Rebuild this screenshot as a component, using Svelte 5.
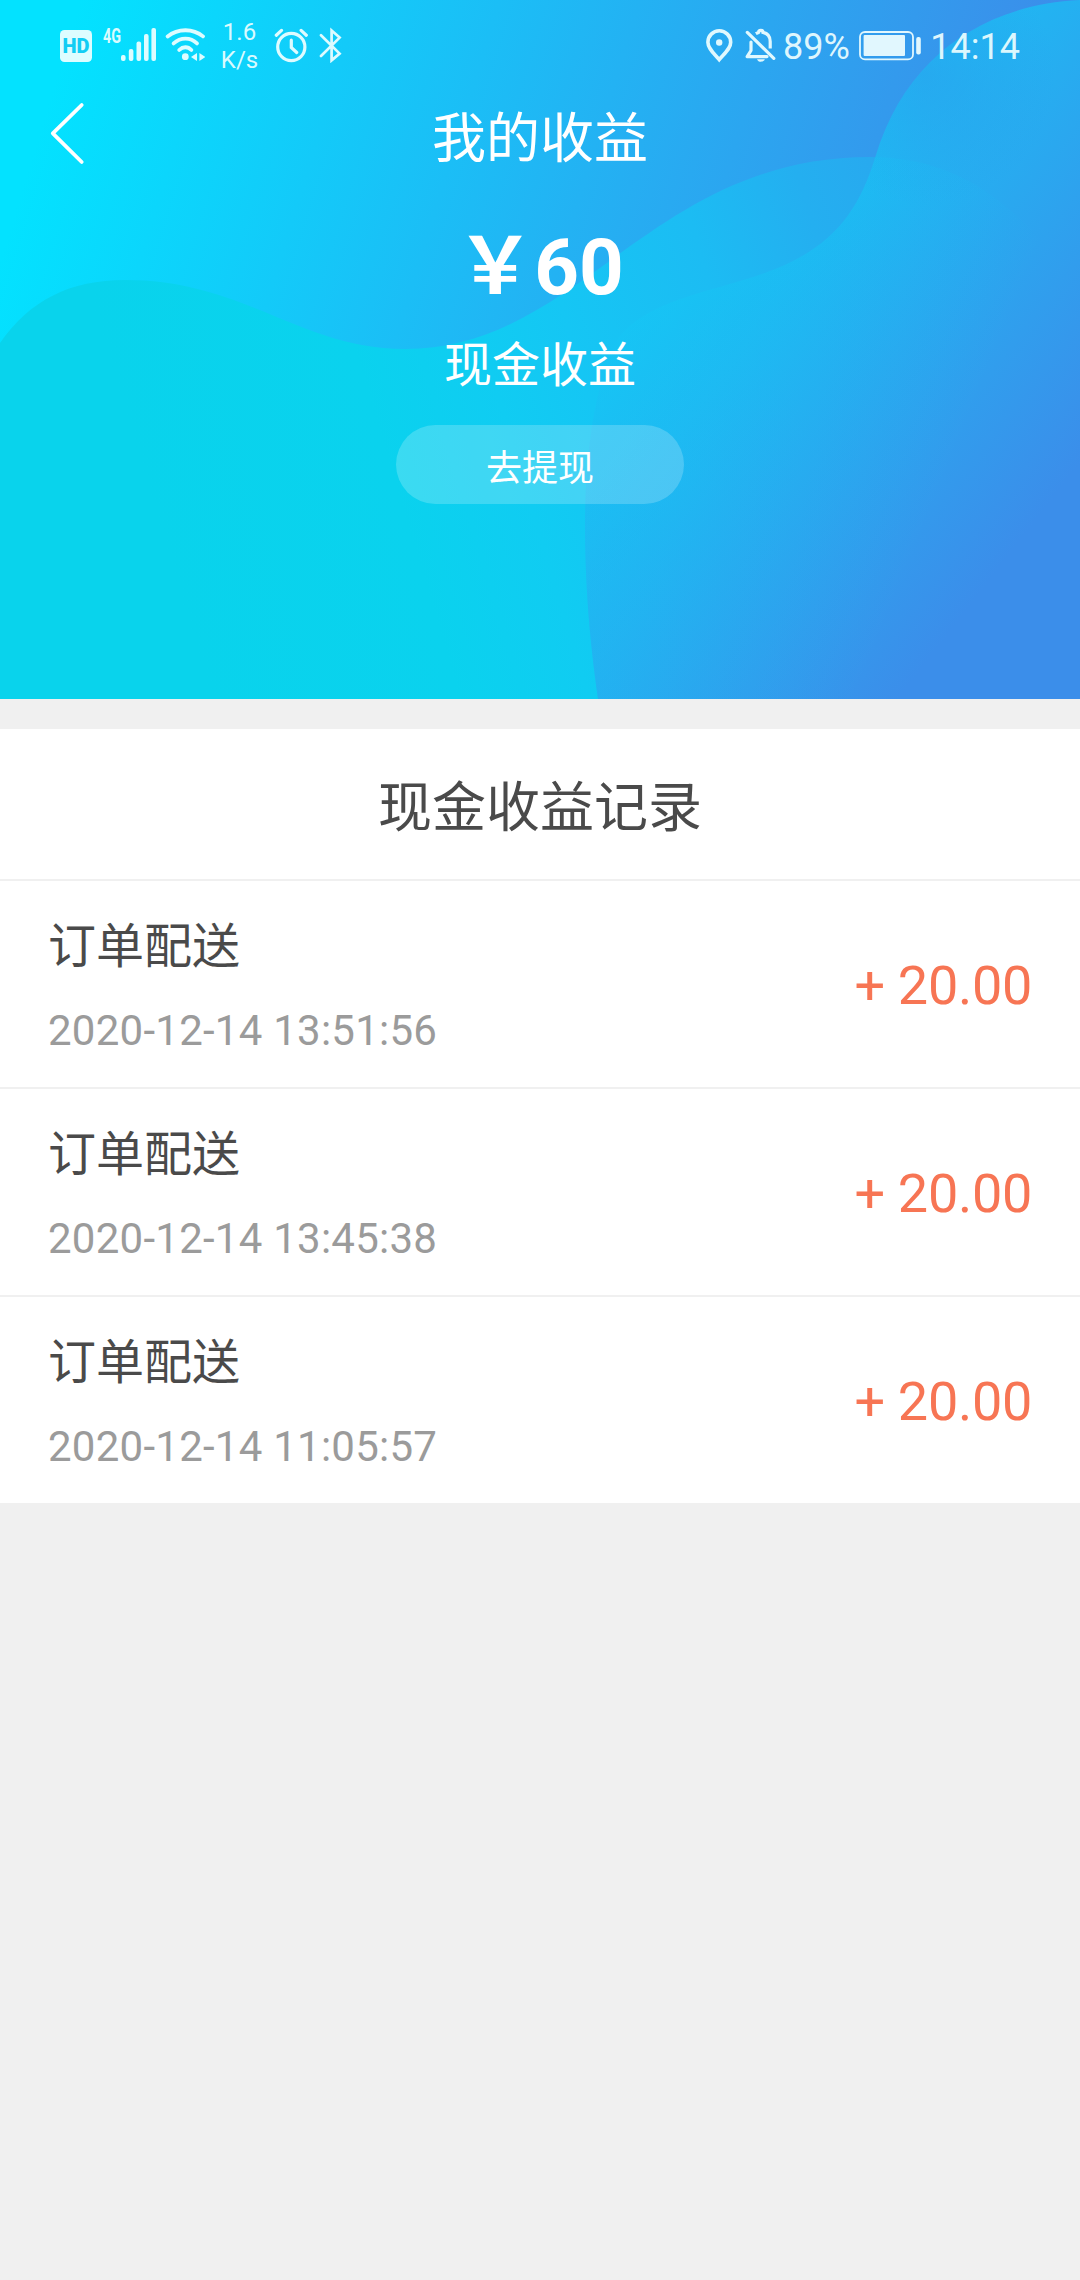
<script>
  const records = [
    { title: '订单配送', time: '2020-12-14 13:51:56', amount: '+ 20.00' },
    { title: '订单配送', time: '2020-12-14 13:45:38', amount: '+ 20.00' },
    { title: '订单配送', time: '2020-12-14 11:05:57', amount: '+ 20.00' }
  ];

  const leftWave =
    'M0 343C30 300 70 280 125 280C245 280 300 349 405 349C580 349 650 157 870 157C960 157 1020 205 1080 290V699H0Z';
  const rightWave =
    'M1080 0C980 5 905 60 876 155C855 225 820 258 740 281C690 296 645 305 618 338C597 380 586 440 585 520C585 590 590 640 598 699H1080Z';
</script>

<main class="screen">
  <header class="hero">
    <svg class="waves" viewBox="0 0 1080 699" preserveAspectRatio="none" aria-hidden="true">
      <defs>
        <linearGradient id="base" gradientUnits="userSpaceOnUse" x1="80" y1="0" x2="975" y2="275">
          <stop offset="0" stop-color="#03e2ff" />
          <stop offset="1" stop-color="#3b8eea" />
        </linearGradient>
        <linearGradient id="left" gradientUnits="userSpaceOnUse" x1="0" y1="0" x2="917" y2="-275">
          <stop offset="0" stop-color="#09d3ec" />
          <stop offset="0.25" stop-color="#0ad2ee" />
          <stop offset="0.38" stop-color="#10ccf2" />
          <stop offset="0.47" stop-color="#15c6f4" />
          <stop offset="0.625" stop-color="#1cbcf3" />
          <stop offset="0.746" stop-color="#24aff0" />
          <stop offset="1" stop-color="#2f9eed" />
        </linearGradient>
        <linearGradient id="right" gradientUnits="userSpaceOnUse" x1="850" y1="0" x2="1218" y2="283">
          <stop offset="0" stop-color="#16c6f5" />
          <stop offset="1" stop-color="#3b8eea" />
        </linearGradient>
        <radialGradient id="shade" gradientUnits="userSpaceOnUse" cx="925" cy="75" r="130">
          <stop offset="0" stop-color="#2f98ec" stop-opacity="0.45" />
          <stop offset="1" stop-color="#2f98ec" stop-opacity="0" />
        </radialGradient>
        <linearGradient id="glow" gradientUnits="userSpaceOnUse" x1="820" y1="160" x2="1040" y2="250">
          <stop offset="0" stop-color="#12c8f4" stop-opacity="0.22" />
          <stop offset="1" stop-color="#12c8f4" stop-opacity="0" />
        </linearGradient>
        <clipPath id="rightClip"><path d={rightWave} /></clipPath>
      </defs>
      <rect width="1080" height="699" fill="url(#base)" />
      <path d={leftWave} fill="url(#left)" />
      <path d={rightWave} fill="url(#right)" />
      <path d={rightWave} fill="url(#shade)" />
      <path d={leftWave} fill="url(#glow)" clip-path="url(#rightClip)" />
    </svg>

    <div class="status">
      <div class="group">
        <svg class="hd" width="32" height="32" viewBox="0 0 32 32">
          <rect width="32" height="32" rx="4.5" fill="currentColor" />
          <text class="hd-label" x="16" y="23" text-anchor="middle" textLength="27" lengthAdjust="spacingAndGlyphs">HD</text>
        </svg>
        <svg class="signal" width="53" height="40" viewBox="103 24 53 40" fill="currentColor">
          <text class="net-label" x="103" y="43" textLength="18" lengthAdjust="spacingAndGlyphs">4G</text>
          <rect x="121" y="55" width="4.6" height="6" rx="2" />
          <rect x="128.8" y="49" width="4.6" height="12" rx="2" />
          <rect x="136.5" y="41.5" width="4.6" height="19.5" rx="2" />
          <rect x="144" y="34" width="4.6" height="27" rx="2" />
          <rect x="151.4" y="28" width="4.6" height="33" rx="2" />
        </svg>
        <svg class="wifi" width="40" height="36" viewBox="165 27 40 36" fill="none" stroke="currentColor" stroke-width="3.8" stroke-linecap="round">
          <path d="M167.6 36.4C178 28.2 193 28.2 203 36.4" />
          <path d="M173.6 43.4C180.6 37 190.4 37 197 43.4" />
          <path d="M179.2 50C183 46.3 187.8 46.3 191.4 50" />
          <circle cx="185.3" cy="56.7" r="3.4" fill="currentColor" stroke="none" />
          <path d="M197 53v8l-6-4zM199.4 53v8l6-4z" fill="currentColor" stroke="none" />
        </svg>
        <div class="speed"><span>1.6</span><span>K/s</span></div>
        <svg class="alarm" width="34" height="36" viewBox="274 27 34 36" fill="none" stroke="currentColor" stroke-width="3.2" stroke-linecap="round">
          <circle cx="291.3" cy="47" r="13.6" />
          <path d="M276.3 35.2l5.2-4.8M306.3 35.2l-5.2-4.8M291.3 40.2v7.3l5.4 5" />
        </svg>
        <svg class="bluetooth" width="24" height="36" viewBox="319 27 24 36" fill="none" stroke="currentColor" stroke-width="2.7" stroke-linecap="round" stroke-linejoin="miter">
          <path d="M321 35.2L339.6 53.6L331.6 60.4V30.6L339.6 37.6L321 56" />
        </svg>
      </div>

      <div class="group">
        <svg class="pin" width="28" height="36" viewBox="706 27 28 36" fill="none" stroke="currentColor" stroke-width="3.6">
          <path d="M720.2 59.6C714.6 53 708.9 48.3 708.9 42.2A11.4 11.4 0 0 1 731.7 42.2C731.7 48.3 725.8 53 720.2 59.6Z" />
          <circle cx="720.2" cy="42.5" r="3.2" fill="currentColor" stroke="none" />
        </svg>
        <svg class="bell" width="32" height="36" viewBox="745 27 32 36" fill="none" stroke="currentColor" stroke-width="3.2" stroke-linecap="round">
          <path d="M748.3 32.4L774.8 58.4" />
          <path d="M752 42V50.5L748.2 56.6H768" stroke-linejoin="round" />
          <path d="M756.8 33.7C758 33 759 32.8 759.6 32.4C759.6 29.6 764 29.6 764 32.4C769 33.4 771.2 37 771.2 41.5V48.5" stroke-linecap="butt" />
          <path d="M758 59.2H765.8C764.8 62.6 759 62.6 758 59.2Z" fill="currentColor" stroke="none" />
        </svg>
        <span class="reading">89%</span>
        <svg class="battery" width="62" height="30" viewBox="859 31 62 30">
          <rect x="860" y="32" width="53" height="27.4" rx="5" fill="none" stroke="currentColor" stroke-width="1.8" />
          <rect x="863.6" y="35" width="41.4" height="21" rx="1" fill="currentColor" />
          <rect x="916.2" y="37" width="4.6" height="17.4" rx="2" fill="currentColor" />
        </svg>
        <span class="reading clock">14:14</span>
      </div>
    </div>

    <nav class="nav">
      <svg class="back" width="36" height="64" viewBox="49 101 36 64" fill="none" stroke="#fff" stroke-width="3.8" stroke-linecap="round" stroke-linejoin="round">
        <path d="M81.7 105L52.8 133.4L81.7 162" />
      </svg>
      <h1>我的收益</h1>
    </nav>

    <div class="summary">
      <strong class="total"><span class="yen">￥</span><span>60</span></strong>
      <span class="caption">现金收益</span>
      <button type="button">去提现</button>
    </div>
  </header>

  <section class="records">
    <h2>现金收益记录</h2>
    {#each records as r}
      <article>
        <div class="info">
          <span class="name">{r.title}</span>
          <time>{r.time}</time>
        </div>
        <span class="amount">{r.amount}</span>
      </article>
    {/each}
  </section>
</main>

<style>
  :global(body) {
    margin: 0;
    background: #f0f0f0;
  }
  .screen {
    width: 1080px;
    min-height: 2280px;
    background: #f0f0f0;
    font-family: Roboto, 'Noto Sans CJK SC', sans-serif;
  }
  .hero {
    position: relative;
    height: 699px;
    color: #fff;
    overflow: hidden;
  }
  .waves {
    position: absolute;
    inset: 0;
    width: 100%;
    height: 100%;
  }
  .status,
  .nav,
  .summary {
    position: relative;
  }
  .status {
    display: flex;
    justify-content: space-between;
    height: 92px;
    padding: 0 60px 0 59.5px;
    box-sizing: border-box;
    color: rgba(240, 255, 255, 0.92);
  }
  .group {
    display: flex;
    align-items: center;
  }
  .group svg {
    display: block;
    flex: none;
  }
  .hd-label {
    font: 900 21px Roboto, sans-serif;
    fill: #12cdf4;
  }
  .net-label {
    font: 700 20px Roboto, sans-serif;
  }
  .signal {
    margin: 0 9px 4px 11.5px;
  }
  .wifi {
    margin-bottom: 2px;
  }
  .speed {
    display: flex;
    flex-direction: column;
    align-items: center;
    width: 36px;
    margin: 0 16px 0 16.5px;
    font-size: 24px;
    line-height: 28px;
  }
  .alarm {
    margin-right: 11px;
  }
  .alarm,
  .bluetooth,
  .pin,
  .bell {
    margin-bottom: 2px;
  }
  .pin {
    margin-right: 11px;
  }
  .reading {
    padding-top: 1px;
    font-size: 36px;
    line-height: 42px;
    margin-left: 7.5px;
  }
  .battery {
    margin-left: 9px;
  }
  .clock {
    margin-left: 9.5px;
  }
  .nav {
    display: grid;
    grid-template-columns: 120px 1fr 120px;
    align-items: center;
    height: 86px;
  }
  .back {
    display: block;
    margin: 0 0 4px 49px;
  }
  h1,
  h2 {
    margin: 0;
    text-align: center;
    font: 400 54px 'Noto Sans CJK SC', sans-serif;
  }
  h1 {
    line-height: 84px;
  }
  .summary {
    display: flex;
    flex-direction: column;
    align-items: center;
    padding-top: 23px;
  }
  .total {
    display: flex;
    align-items: baseline;
    height: 118px;
    font-weight: 700;
    font-size: 78px;
    line-height: 118px;
  }
  .yen {
    font-family: 'Noto Sans CJK SC', sans-serif;
  }
  .caption {
    margin-top: 6px;
    font: 400 48px 'Noto Sans CJK SC', sans-serif;
    line-height: 72px;
  }
  button {
    width: 288px;
    height: 79px;
    margin-top: 28px;
    padding: 1px 0 0;
    border: 0;
    border-radius: 40px;
    background: rgba(255, 255, 255, 0.2);
    color: #fff;
    font: 400 36px 'Noto Sans CJK SC', sans-serif;
    line-height: 78px;
  }
  .records {
    margin-top: 30px;
    background: #fff;
    color: #4a4a4a;
  }
  h2 {
    line-height: 150px;
  }
  article {
    display: flex;
    align-items: center;
    justify-content: space-between;
    height: 208px;
    padding: 0 48px;
    box-sizing: border-box;
    border-top: 2px solid #f0f0f0;
  }
  .info {
    display: flex;
    flex-direction: column;
    padding-bottom: 6px;
  }
  .name {
    font: 400 48px 'Noto Sans CJK SC', sans-serif;
    line-height: 72px;
  }
  time {
    margin-top: 27px;
    color: #9b9b9b;
    font-size: 42px;
    line-height: 52px;
    letter-spacing: 0.25px;
  }
  .amount {
    padding-top: 3px;
    color: #f77554;
    font-size: 54px;
    letter-spacing: -0.3px;
  }
</style>
